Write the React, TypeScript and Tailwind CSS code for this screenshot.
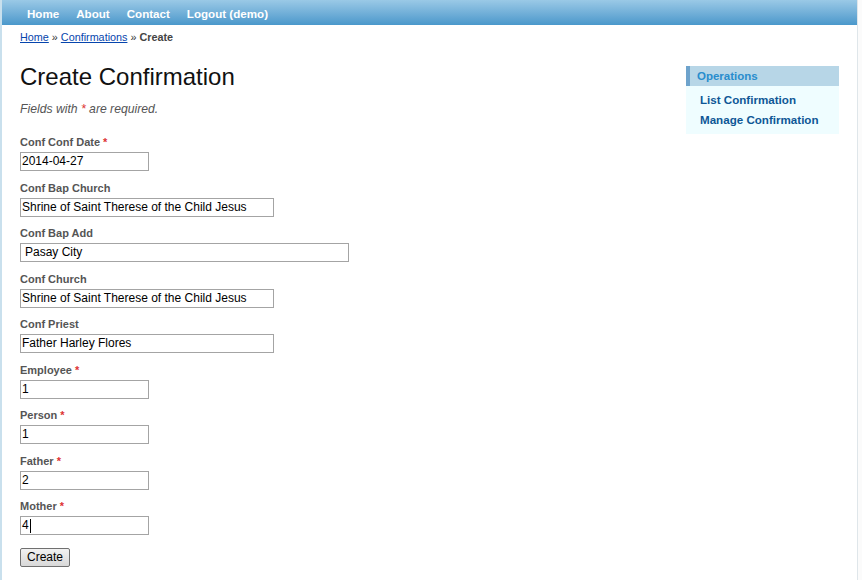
import React from 'react';

const fields = [
    { label: 'Conf Conf Date', required: true, value: '2014-04-27', width: 'w-[129px]', pad: 'pl-[1px]' },
    { label: 'Conf Bap Church', required: false, value: 'Shrine of Saint Therese of the Child Jesus', width: 'w-[254px]', pad: 'pl-[1px]' },
    { label: 'Conf Bap Add', required: false, value: 'Pasay City', width: 'w-[329px]', pad: 'pl-[4px]' },
    { label: 'Conf Church', required: false, value: 'Shrine of Saint Therese of the Child Jesus', width: 'w-[254px]', pad: 'pl-[1px]' },
    { label: 'Conf Priest', required: false, value: 'Father Harley Flores', width: 'w-[254px]', pad: 'pl-[1px]' },
    { label: 'Employee', required: true, value: '1', width: 'w-[129px]', pad: 'pl-[1px]' },
    { label: 'Person', required: true, value: '1', width: 'w-[129px]', pad: 'pl-[1px]' },
    { label: 'Father', required: true, value: '2', width: 'w-[129px]', pad: 'pl-[1px]' },
    { label: 'Mother', required: true, value: '4', width: 'w-[129px]', pad: 'pl-[1px]', caret: true },
];

export default function App() {
    return (
        <div className="w-[862px] h-[580px] overflow-hidden bg-[#fbfbfb] font-['Liberation_Sans',Arial,sans-serif]">
            <div className="w-[858px] h-full bg-white border-l-2 border-r border-l-[#c9e0ed] border-r-[#dfe6ea] flex flex-col">
                {/* main menu */}
                <div className="h-[25px] bg-gradient-to-b from-[#9ac9e6] to-[#4a98cb] flex items-center pt-[3px] pl-[25px] gap-[17px] text-white font-bold text-[11.6px]">
                    <span>Home</span>
                    <span>About</span>
                    <span>Contact</span>
                    <span>Logout (demo)</span>
                </div>

                <div className="flex">
                    {/* content */}
                    <div className="flex-1 pl-[18px]">
                        <div className="pt-[5px] text-[10.8px] leading-[14px] text-[#333]">
                            <span className="text-[#0645ad] underline">Home</span>
                            <span> » </span>
                            <span className="text-[#0645ad] underline">Confirmations</span>
                            <span> » </span>
                            <span className="font-bold text-[#444]">Create</span>
                        </div>

                        <h1 className="mt-[19px] text-[24px] leading-[28px] text-[#111]">Create Confirmation</h1>

                        <p className="mt-[11px] text-[12.2px] leading-[14px] italic text-[#555]">
                            Fields with <span className="text-[#d33]">*</span> are required.
                        </p>

                        <div className="mt-[19px] flex flex-col">
                            {fields.map(f => (
                                <div key={f.label} className="mb-[9.5px]">
                                    <div className="h-[14px] text-[11px] leading-[14px] font-bold text-[#555]">
                                        {f.label}
                                        {f.required && <span className="text-[#d33]"> *</span>}
                                    </div>
                                    <div className={`mt-[3px] h-[19px] ${f.width} ${f.pad} border border-[#a4a4a4] bg-white text-[12px] leading-[17px] text-black flex items-center`}>
                                        {f.value}
                                        {f.caret && <span className="ml-[1px] w-px h-[14px] bg-black" />}
                                    </div>
                                </div>
                            ))}
                            <button className="mt-[3px] w-[50px] h-[19px] border border-[#707070] rounded-[2px] bg-gradient-to-b from-[#f2f2f2] to-[#d8d8d8] text-[12px] leading-[17px] text-black">
                                Create
                            </button>
                        </div>
                    </div>

                    {/* sidebar */}
                    <div className="w-[153px] mr-[18px] mt-[41px] self-start bg-[#effdff]">
                        <div className="h-[20px] bg-[#b7d6e7] border-l-4 border-[#6ea3cc] pl-[7px] text-[11.5px] leading-[20px] font-bold text-[#298dcd]">
                            Operations
                        </div>
                        <div className="py-[4px] pl-[14px] text-[11.6px] leading-[20px] font-bold text-[#0e5796]">
                            <div>List Confirmation</div>
                            <div>Manage Confirmation</div>
                        </div>
                    </div>
                </div>
            </div>
        </div>
    );
}
